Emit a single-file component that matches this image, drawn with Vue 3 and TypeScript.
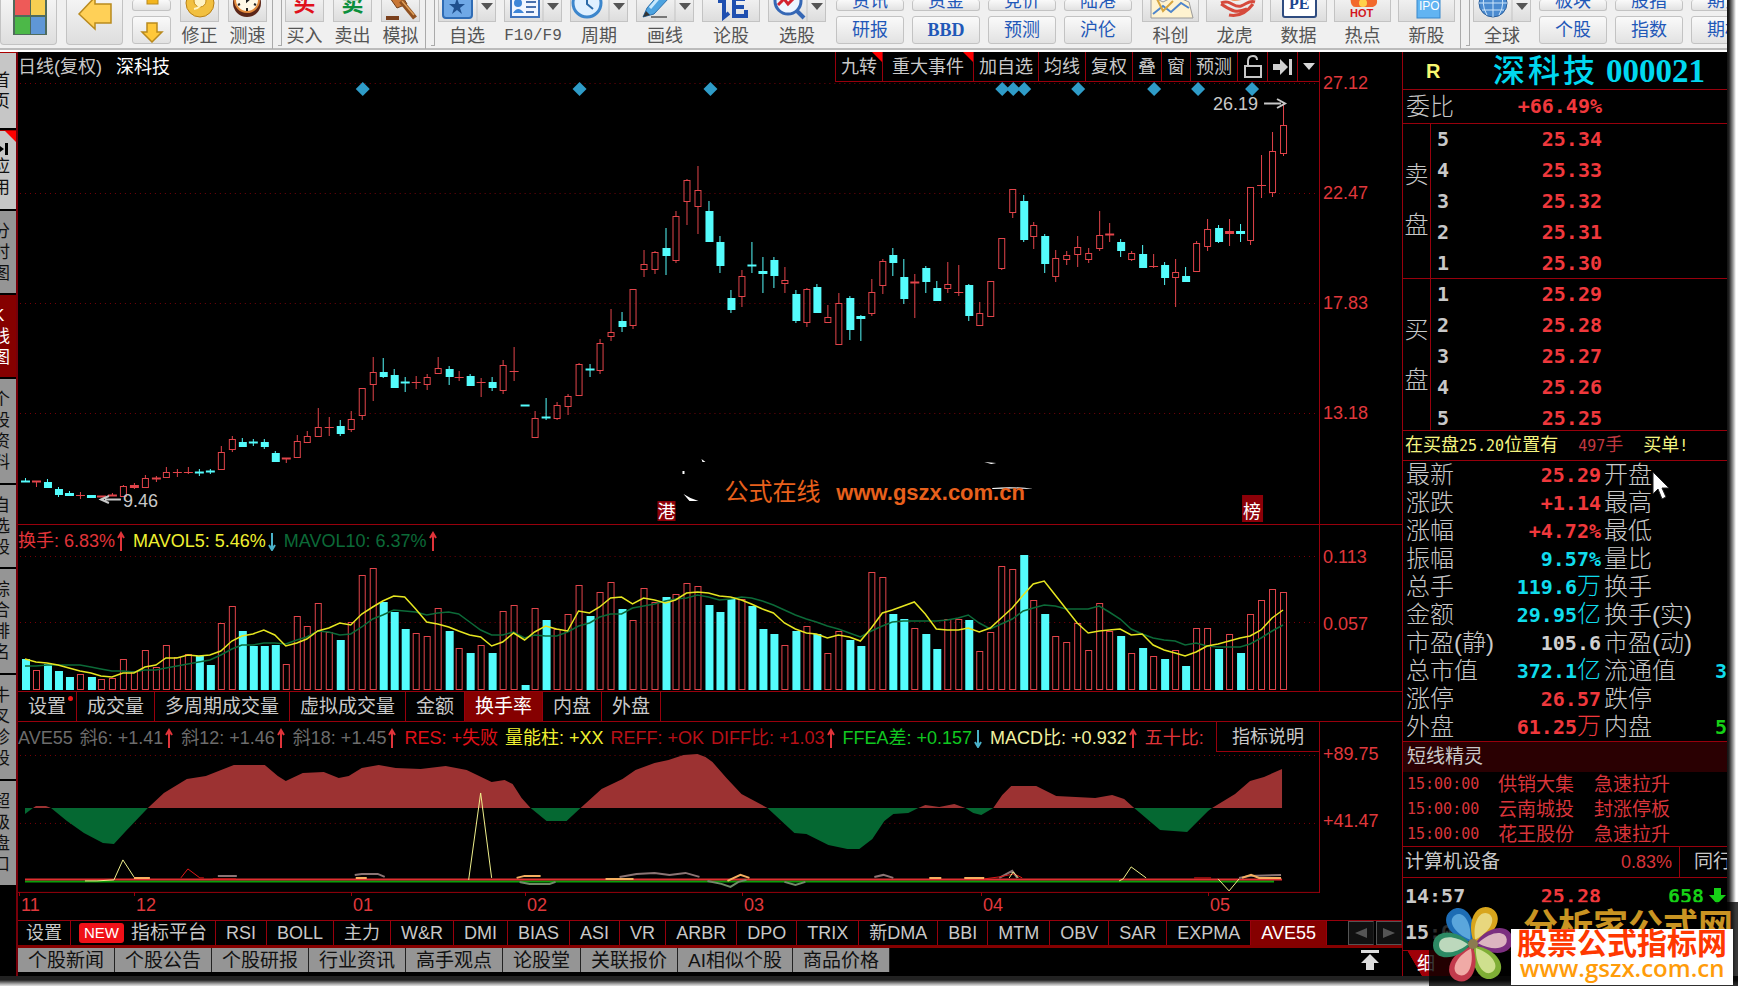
<script setup lang="ts">
type Kind = 'R' | 'C'
type Candle = [Kind, number, number, number, number, number]

// kind, high, body top, body bottom, low, turnover bar top
const candles: Candle[] = [
  ['C', 478, 481, 482, 482, 659], ['R', 481, 481, 482, 487, 670], ['C', 479, 482, 488, 488, 664],
  ['C', 487, 489, 495, 497, 671], ['C', 491, 494, 496, 496, 677], ['R', 492, 495, 495, 499, 674],
  ['C', 495, 496, 498, 498, 677], ['R', 496, 496, 497, 497, 679], ['R', 493, 495, 496, 496, 678],
  ['R', 485, 486, 496, 496, 659], ['R', 483, 486, 488, 489, 671], ['R', 475, 478, 487, 487, 650],
  ['R', 476, 478, 479, 482, 667], ['R', 467, 472, 477, 477, 645], ['R', 469, 472, 472, 477, 657],
  ['R', 467, 472, 472, 474, 654], ['C', 469, 472, 473, 476, 656], ['C', 469, 471, 472, 474, 665],
  ['R', 446, 452, 469, 469, 623], ['R', 436, 439, 449, 452, 606], ['C', 438, 442, 447, 447, 631],
  ['C', 439, 442, 443, 446, 646], ['C', 439, 442, 447, 449, 646], ['C', 451, 453, 462, 462, 645],
  ['R', 458, 458, 459, 463, 664], ['R', 435, 441, 457, 458, 616], ['R', 431, 436, 442, 443, 626],
  ['R', 408, 427, 436, 437, 603], ['R', 417, 427, 427, 436, 632], ['C', 420, 426, 434, 436, 640],
  ['R', 411, 419, 429, 432, 622], ['R', 388, 388, 415, 420, 575], ['R', 357, 372, 384, 401, 568],
  ['C', 358, 372, 377, 378, 602], ['C', 369, 375, 388, 388, 612], ['C', 377, 382, 383, 392, 629],
  ['R', 376, 382, 382, 389, 633], ['R', 374, 377, 384, 390, 636], ['R', 357, 368, 373, 374, 608],
  ['C', 366, 369, 377, 385, 631], ['R', 371, 377, 377, 381, 648], ['C', 374, 376, 386, 386, 653],
  ['R', 378, 382, 382, 397, 645], ['C', 377, 382, 388, 391, 653], ['R', 360, 365, 390, 394, 611],
  ['R', 347, 371, 371, 381, 605], ['C', 405, 405, 406, 406, 685], ['R', 411, 418, 437, 437, 608],
  ['C', 398, 417, 418, 420, 620], ['R', 402, 405, 418, 420, 629], ['R', 394, 396, 406, 415, 614],
  ['R', 363, 364, 395, 395, 585], ['C', 364, 369, 370, 377, 616], ['R', 339, 343, 370, 374, 592],
  ['R', 309, 332, 336, 341, 582], ['C', 312, 321, 327, 332, 609], ['R', 289, 289, 325, 329, 620],
  ['R', 250, 264, 269, 277, 588], ['R', 251, 252, 269, 274, 602], ['C', 228, 248, 256, 275, 597],
  ['R', 211, 216, 260, 263, 594], ['R', 179, 180, 201, 225, 583], ['R', 166, 190, 206, 234, 586],
  ['C', 201, 211, 242, 242, 605], ['C', 236, 242, 266, 273, 612], ['C', 290, 298, 310, 313, 599],
  ['R', 270, 276, 296, 307, 599], ['C', 242, 265, 266, 273, 606], ['C', 257, 272, 274, 293, 629],
  ['C', 257, 260, 276, 288, 634], ['R', 267, 280, 283, 293, 645], ['C', 290, 294, 321, 323, 631],
  ['R', 288, 289, 322, 327, 626], ['C', 284, 287, 313, 313, 634], ['R', 305, 317, 322, 323, 653],
  ['R', 293, 303, 344, 344, 631], ['C', 296, 298, 330, 340, 640], ['C', 315, 317, 319, 341, 646],
  ['R', 279, 292, 313, 316, 572], ['R', 259, 261, 285, 294, 577], ['C', 248, 255, 263, 276, 614],
  ['C', 259, 277, 299, 304, 619], ['R', 274, 282, 283, 318, 628], ['C', 266, 268, 282, 293, 634],
  ['C', 281, 288, 301, 301, 649], ['R', 262, 284, 288, 293, 619], ['R', 265, 292, 292, 296, 619],
  ['C', 284, 285, 316, 321, 620], ['R', 302, 313, 325, 325, 651], ['R', 281, 281, 316, 317, 632],
  ['R', 238, 238, 268, 270, 566], ['R', 189, 189, 212, 218, 569], ['C', 195, 201, 240, 242, 555],
  ['R', 222, 225, 236, 249, 600], ['C', 234, 236, 264, 273, 614], ['R', 250, 258, 276, 282, 636],
  ['R', 251, 255, 259, 265, 642], ['R', 236, 247, 254, 267, 623], ['R', 248, 253, 259, 263, 650],
  ['R', 211, 235, 248, 251, 603], ['R', 223, 234, 235, 242, 631], ['C', 239, 242, 251, 257, 636],
  ['R', 251, 253, 259, 261, 653], ['C', 245, 254, 268, 268, 648], ['R', 254, 266, 266, 268, 656],
  ['C', 262, 265, 278, 285, 659], ['R', 259, 272, 277, 307, 650], ['C', 267, 276, 282, 282, 666],
  ['R', 241, 243, 271, 271, 628], ['R', 219, 229, 246, 251, 628], ['C', 225, 228, 242, 243, 649],
  ['R', 219, 232, 234, 246, 634], ['C', 224, 232, 234, 242, 653], ['R', 187, 187, 240, 245, 614],
  ['R', 155, 185, 185, 198, 600], ['R', 132, 151, 192, 197, 589], ['R', 103, 125, 153, 156, 592],
]
const STEP = 10.85
const xOf = (i: number): number => Math.round(25.4 + i * STEP)

interface Shape { red: boolean; x: number; hi: number; top: number; h: number; bottom: number; lo: number; vol: number }
const shapes: Shape[] = candles.map(([k, hi, top, bottom, lo, vol], i) => ({
  red: k === 'R', x: xOf(i), hi, top, h: Math.max(bottom - top, 0), bottom, lo, vol,
}))

const earlier = [673, 673, 673, 673, 673, 659, 659, 660, 660]
function average(n: number): string {
  const all = [...earlier, ...candles.map((c) => c[5])]
  return candles.map((_, i) => {
    const end = i + earlier.length + 1
    const part = all.slice(end - n, end)
    return `${xOf(i)},${Math.round(part.reduce((a, b) => a + b, 0) / n)}`
  }).join(' ')
}
const ma5 = average(5)
const ma10 = average(10)

const wave = 'M25 807L25 813 33 807 36 805 46 805 51 807 67 820 84 832 103 842 114 843 126 830 148 807 164 792 187 778 206 775 234 764 265 764 278 775 286 780 303 772 324 771 339 777 349 775 362 767 379 764 396 767 421 768 446 765 467 769 492 781 505 779 513 783 522 797 531 807 547 820 567 820 581 807 602 788 623 778 636 769 655 762 669 759 684 754 698 753 706 756 713 761 727 777 742 793 768 807 795 832 807 833 829 844 848 848 860 848 873 838 885 820 894 813 909 812 919 807 926 804 940 806 955 803 966 807 974 812 982 814 994 807 1003 794 1012 785 1037 785 1057 795 1096 797 1113 794 1125 798 1135 807 1161 829 1188 831 1209 810 1213 807 1236 793 1251 780 1265 776 1283 768 1283 807Z'

const diamonds = [363, 580, 711, 1003, 1014, 1025, 1079, 1155, 1199, 1253]
const months: [string, number][] = [['11', 19], ['12', 134], ['01', 351], ['02', 525], ['03', 742], ['04', 981], ['05', 1208]]

const sideTabs = [
  { text: '首页', cls: 'light s1' }, { text: '应用', cls: 'light s2', mark: true }, { text: '分时图', cls: 's3' },
  { text: 'K线图', cls: 'on s3' }, { text: '个股资料', cls: 's4' }, { text: '自选股', cls: 's3' },
  { text: '综合排名', cls: 's4' }, { text: '牛叉诊股', cls: 's4' }, { text: '超级盘口', cls: 's4' },
]
const toolsA = [
  { id: 'fav', text: '自选', drop: true }, { id: 'card', text: 'F10/F9', drop: true }, { id: 'clock', text: '周期', drop: true },
  { id: 'pen', text: '画线', drop: true }, { id: 'talk', text: '论股', drop: false }, { id: 'pick', text: '选股', drop: true },
]
const toolsB = [
  { id: 'map', text: '科创' }, { id: 'dragon', text: '龙虎' }, { id: 'pe', text: '数据' }, { id: 'hot', text: '热点' }, { id: 'ipo', text: '新股' },
]
const pairsA = [['资讯', '研报'], ['资金', 'BBD'], ['竞价', '预测'], ['陆港', '沪伦']]
const pairsB = [['板块', '个股'], ['股指', '指数'], ['期货', '期权']]

const topTabs = [
  { text: '九转', fresh: true }, { text: '重大事件', fresh: true, wide: true }, { text: '加自选' }, { text: '均线' },
  { text: '复权' }, { text: '叠' }, { text: '窗' }, { text: '预测' },
]
const volumeTabs = ['设置', '成交量', '多周期成交量', '虚拟成交量', '金额', '换手率', '内盘', '外盘']
const indicatorTabs = ['RSI', 'BOLL', '主力', 'W&R', 'DMI', 'BIAS', 'ASI', 'VR', 'ARBR', 'DPO', 'TRIX', '新DMA', 'BBI', 'MTM', 'OBV', 'SAR', 'EXPMA', 'AVE55']
const infoTabs = ['个股新闻', '个股公告', '个股研报', '行业资讯', '高手观点', '论股堂', '关联报价', 'AI相似个股', '商品价格']

interface Legend { text: string; cls: string; dir?: 'up' | 'down' }
const volumeLegend: Legend[] = [
  { text: '换手: 6.83%', cls: 'c-red', dir: 'up' }, { text: 'MAVOL5: 5.46%', cls: 'c-yellow', dir: 'down' },
  { text: 'MAVOL10: 6.37%', cls: 'c-green', dir: 'up' },
]
const waveLegend: Legend[] = [
  { text: 'AVE55', cls: 'c-grey' }, { text: '斜6: +1.41', cls: 'c-grey', dir: 'up' }, { text: '斜12: +1.46', cls: 'c-grey', dir: 'up' },
  { text: '斜18: +1.45', cls: 'c-grey', dir: 'up' }, { text: 'RES: +失败', cls: 'c-pure' }, { text: '量能柱: +XX', cls: 'c-yellow' },
  { text: 'REFF: +OK', cls: 'c-dark' }, { text: 'DIFF比: +1.03', cls: 'c-dark', dir: 'up' }, { text: 'FFEA差: +0.157', cls: 'c-lime', dir: 'down' },
  { text: 'MACD比: +0.932', cls: 'c-pale', dir: 'up' }, { text: '五十比:', cls: 'c-red' },
]

const asks = [['5', '25.34'], ['4', '25.33'], ['3', '25.32'], ['2', '25.31'], ['1', '25.30']]
const bids = [['1', '25.29'], ['2', '25.28'], ['3', '25.27'], ['4', '25.26'], ['5', '25.25']]
const stats = [
  { a: '最新', v: '25.29', u: '', c: 'up', b: '开盘', e: '' },
  { a: '涨跌', v: '+1.14', u: '', c: 'up', b: '最高', e: '' },
  { a: '涨幅', v: '+4.72%', u: '', c: 'up', b: '最低', e: '' },
  { a: '振幅', v: '9.57%', u: '', c: 'cy', b: '量比', e: '' },
  { a: '总手', v: '119.6', u: '万', c: 'cy', b: '换手', e: '' },
  { a: '金额', v: '29.95', u: '亿', c: 'cy', b: '换手(实)', e: '' },
  { a: '市盈(静)', v: '105.6', u: '', c: 'wh', b: '市盈(动)', e: '' },
  { a: '总市值', v: '372.1', u: '亿', c: 'cy', b: '流通值', e: '3', ec: 'cy' },
  { a: '涨停', v: '26.57', u: '', c: 'up', b: '跌停', e: '' },
  { a: '外盘', v: '61.25', u: '万', c: 'up', b: '内盘', e: '5', ec: 'gr' },
]
const alerts = [['15:00:00', '供销大集', '急速拉升'], ['15:00:00', '云南城投', '封涨停板'], ['15:00:00', '花王股份', '急速拉升']]
const petals = [
  { r: -32, fill: '#1d6cb4', inner: '#5aa6dc' }, { r: 27, fill: '#d8a51c', inner: '#e8d77e' }, { r: 82, fill: '#7b2f80', inner: '#dcb4c0' },
  { r: 145, fill: '#7fae35', inner: '#cfe08e' }, { r: 205, fill: '#c23a4c', inner: '#f0aaa6' }, { r: 268, fill: '#2c8a64', inner: '#bcd8bc' },
]
</script>

<template>
  <div class="app">
    <header class="toolbar">
      <div class="group">
        <button class="big" aria-label="首页">
          <svg width="57" height="44"><rect x="12" y="-4" width="34" height="39" fill="#4f6b5c" /><rect x="14" y="-2" width="15" height="17" fill="#ee5a58" /><rect x="30" y="-2" width="14" height="17" fill="#f6cf52" /><rect x="14" y="17" width="15" height="17" fill="#4cb848" /><rect x="30" y="17" width="14" height="17" fill="#5f97d6" /></svg>
        </button>
        <button class="big" aria-label="后退">
          <svg width="57" height="44"><path d="M12 14L28 -3V4H44V23H28V29Z" fill="#ffd057" stroke="#b98a1e" stroke-width="1.5" /></svg>
        </button>
        <div class="pair narrow">
          <button class="half" aria-label="上"><svg width="38" height="12"><rect x="14" y="-6" width="11" height="12" fill="#f3b51d" stroke="#b98a1e" /></svg></button>
          <button class="half" aria-label="下"><svg width="38" height="28"><path d="M14 6H24V15H29L19 25L9 15H14Z" fill="#ffc83a" stroke="#b98a1e" stroke-width="1.5" /></svg></button>
        </div>
        <button class="tool small"><span class="icon"><svg width="37" height="22"><circle cx="19" cy="3" r="14" fill="#f2c040" stroke="#b98218" /><circle cx="19" cy="1" r="6" fill="#fff3c4" stroke="#c48e1b" /><path d="M20 2Q20 8 13 9" fill="none" stroke="#fff3c4" stroke-width="2" /></svg></span>修正</button>
        <button class="tool small"><span class="icon"><svg width="37" height="22"><circle cx="18" cy="3" r="14" fill="#5b2618" /><circle cx="18" cy="0" r="12" fill="#fff8e6" stroke="#e28a3c" stroke-width="2" /><path d="M18 -6V1L24 -4M18 8V11M9 5L11 4M27 5L25 4" stroke="#222" stroke-width="2" fill="none" /></svg></span>测速</button>
      </div>
      <i class="sep"></i>
      <div class="group">
        <button class="tool small"><span class="icon glyph red">买</span>买入</button>
        <button class="tool small"><span class="icon glyph green">卖</span>卖出</button>
        <button class="tool small"><span class="icon"><svg width="37" height="22"><path d="M8 -2L19 -6L25 4L15 8Z" fill="#c97735" stroke="#71401c" /><path d="M19 1L33 18" stroke="#8f5020" stroke-width="5" /><path d="M20 1L32 15" stroke="#e0a05a" stroke-width="1.5" /><rect x="4" y="16" width="13" height="4" fill="#7a3f1c" /></svg></span>模拟</button>
      </div>
      <i class="sep"></i>
      <div class="group tight">
        <button v-for="t in toolsA" :key="t.id" class="tool">
          <span class="icon">
            <svg width="56" height="22">
              <g v-if="t.id === 'fav'"><rect x="4" y="-8" width="29" height="26" rx="3" fill="#6fa8e6" stroke="#2f6cb5" stroke-width="2" /><path d="M18 -2L20 4H26L21 8L23 14L18 10L13 14L15 8L10 4H16Z" fill="#1f4f8e" /></g>
              <g v-else-if="t.id === 'card'"><rect x="6" y="-8" width="28" height="25" fill="#f2f6ff" stroke="#3f73bd" stroke-width="2" /><circle cx="13" cy="3" r="4" fill="#3f86d8" /><path d="M8 13Q13 5 19 13Z" fill="#3f86d8" /><path d="M21 2H31M21 7H31M21 12H29" stroke="#4970ae" stroke-width="2" /></g>
              <g v-else-if="t.id === 'clock'"><circle cx="16" cy="3" r="14" fill="#dff0ff" stroke="#3c86cc" stroke-width="3" /><path d="M16 -6V4L22 9" stroke="#2b6aa8" stroke-width="2" fill="none" /></g>
              <g v-else-if="t.id === 'pen'"><path d="M6 17L10 8L22 -6L32 -2L17 14Z" fill="#4da3e0" stroke="#2d70ab" /><path d="M13 8L25 -6" stroke="#c8e8fc" stroke-width="3" /><path d="M6 17L9 11L13 15Z" fill="#333" /><path d="M14 17H30" stroke="#777" stroke-width="2" /></g>
              <g v-else-if="t.id === 'talk'" fill="none" stroke="#1e4fb0" stroke-width="4"><path d="M15 1H21V17L26 13M29 -1H42M31 0V16H43V10M31 7H41" /></g>
              <g v-else><circle cx="19" cy="1" r="13" fill="#eef5ff" stroke="#3567b5" stroke-width="3" /><path d="M28 11L35 18" stroke="#3567b5" stroke-width="4" /><path d="M9 5L15 -1L19 4L28 -5" stroke="#d32230" stroke-width="3" fill="none" /></g>
              <g v-if="t.drop"><path d="M38 0V22" stroke="#c3c3c3" /><path d="M42 3H54L48 10Z" fill="#555" /></g>
            </svg>
          </span><span :class="{ mono: t.id === 'card' }">{{ t.text }}</span>
        </button>
      </div>
      <div class="group tight lead">
        <div v-for="p in pairsA" :key="p[1]" class="pair">
          <button class="half">{{ p[0] }}</button>
          <button class="half" :class="{ serif: p[1] === 'BBD' }">{{ p[1] }}</button>
        </div>
      </div>
      <div class="group close lead">
        <button v-for="t in toolsB" :key="t.id" class="tool">
          <span class="icon">
            <svg width="56" height="22">
              <g v-if="t.id === 'map'"><path d="M8 -4L20 2L32 -4L46 2L50 18H8Z" fill="#fff3d0" stroke="#9a9a9a" /><path d="M10 14L20 6L28 12L38 3L46 8" fill="none" stroke="#4f86cc" stroke-width="2" /><path d="M14 -1L20 11L30 1" fill="none" stroke="#d7a640" stroke-width="2" /></g>
              <g v-else-if="t.id === 'dragon'" fill="none" stroke="#d64a3c" stroke-width="3"><path d="M14 3C24 -1 26 8 34 6C40 4 42 0 48 2M22 15C32 17 40 12 46 4M14 4C24 10 28 14 40 9" /><path d="M22 -3C28 3 36 -4 44 -2" stroke="#f09a62" /></g>
              <g v-else-if="t.id === 'pe'"><rect x="12" y="-8" width="33" height="25" rx="2" fill="#fff" stroke="#2f4c80" stroke-width="2" /><text x="18" y="9" class="pe">PE</text></g>
              <g v-else-if="t.id === 'hot'"><path d="M16 -5Q14 8 22 7H38Q45 5 40 -6Q32 5 29 -5Q24 5 16 -5Z" fill="#f2692c" /><circle cx="28" cy="3" r="4" fill="#ffd24a" /><text x="15" y="17" class="hottext">HOT</text></g>
              <g v-else><rect x="18" y="-8" width="23" height="26" fill="#62b4f2" stroke="#3687cc" /><text x="20" y="10" class="ipo">IPO</text></g>
            </svg>
          </span>{{ t.text }}
        </button>
      </div>
      <i class="sep"></i>
      <div class="group tight">
        <button class="tool"><span class="icon"><svg width="56" height="22"><circle cx="19" cy="3" r="14" fill="#4b8bd0" stroke="#2a5f9c" /><path d="M5 3H33M8 10H30M19 -11V17M12 -9Q6 3 13 15M26 -9Q32 3 25 15" stroke="#cbe4fa" fill="none" /><path d="M38 0V22" stroke="#c3c3c3" /><path d="M42 3H54L48 10Z" fill="#555" /></svg></span>全球</button>
        <div v-for="p in pairsB" :key="p[1]" class="pair"><button class="half">{{ p[0] }}</button><button class="half">{{ p[1] }}</button></div>
      </div>
    </header>

    <main class="workspace">
      <nav class="side">
        <button v-for="s in sideTabs" :key="s.text" :class="s.cls"><b v-if="s.mark" class="flag"></b><svg v-if="s.mark" width="8" height="14"><path d="M0 4L4 7L0 10ZM5 1H8V13H5Z" /></svg><span v-for="c in s.text" :key="c">{{ c }}</span></button>
      </nav>

      <section class="center">
        <div class="pane headrow">
          <div class="head">
            <h1>日线(复权)<strong>深科技</strong></h1>
            <div class="toptabs">
              <button v-for="t in topTabs" :key="t.text" :class="{ fresh: t.fresh, wide: t.wide }">{{ t.text }}</button>
              <button class="ic" aria-label="解锁"><svg width="20" height="24"><path d="M2 11H18V22H2ZM5 11V6Q5 1 10 1Q14 1 14 5" fill="none" stroke="#c8c8c8" stroke-width="2" /></svg></button>
              <button class="ic" aria-label="最后"><svg width="20" height="20"><path d="M0 7H7V2L15 10L7 18V13H0ZM16 2H19V18H16Z" fill="#d0d0d0" /></svg></button>
              <button class="ic last" aria-label="更多"><svg width="12" height="8"><path d="M0 0H12L6 7Z" fill="#d8d8d8" /></svg></button>
            </div>
          </div>
        </div>

        <div class="pane price">
          <svg class="plot" viewBox="18 82 1302 442" preserveAspectRatio="none">
            <g class="grid"><path v-for="y in [83, 193, 303, 413]" :key="y" :d="`M20 ${y}.5H1319`" /></g>
            <path v-for="x in diamonds" :key="x" :d="`M${x} 82L${x + 7} 89L${x} 96L${x - 7} 89Z`" fill="#2f9cc8" />
            <g v-for="s in shapes" :key="s.x" :class="s.red ? 'r' : 'c'">
              <path :d="`M${s.x}.5 ${s.hi}V${s.top}M${s.x}.5 ${s.bottom}V${s.lo}`" />
              <rect v-if="s.h > 2" :x="s.x - 3 + 0.5 - (s.red ? 0 : 0.5)" :y="s.red ? s.top + 0.5 : s.top" :width="s.red ? 6 : 8" :height="s.h" />
              <path v-else :d="`M${s.x - 4} ${s.top + 0.5}H${s.x + 5}`" :stroke-width="s.h + 1" />
            </g>
            <g class="note"><text x="1214" y="110">26.19</text><path d="M1265 103.5H1282M1278 99L1286 103.5L1278 108" /><text x="123" y="507">9.46</text><path d="M121 499.5H105M109 496L101 499.5L109 503" /></g>
            <g class="badge"><rect x="658" y="501" width="18" height="20" /><text x="658" y="518">港</text><rect x="1243" y="495" width="21" height="27" /><text x="1244" y="518">榜</text></g>
            <g fill="#fff"><path d="M684 494L691 498L699 501H690ZM702 459L706 462H703ZM683 471H685V474H683ZM985 462L997 463L992 464ZM993 488Q1015 486 1034 489Q1010 488 993 489Z" /></g>
            <g class="mark"><text x="725" y="500" class="cn">公式在线</text><text x="837" y="500" class="url">www.gszx.com.cn</text></g>
          </svg>
          <div class="axis four"><span>27.12</span><span>22.47</span><span>17.83</span><span>13.18</span></div>
        </div>

        <div class="pane rule">
          <div class="legend">
            <span v-for="l in volumeLegend" :key="l.text" :class="l.cls">{{ l.text }}<svg v-if="l.dir" width="8" height="20" :class="l.dir"><path v-if="l.dir === 'up'" d="M4 20V2M1 7L4 2L7 7" /><path v-else d="M4 2V19M1 14L4 19L7 14" /></svg></span>
          </div>
        </div>
        <div class="pane volume">
          <svg class="plot" viewBox="18 556 1302 135" preserveAspectRatio="none">
            <g class="grid"><path d="M20 556.5H1319M20 622.5H1319" /></g>
            <g v-for="s in shapes" :key="s.x" :class="s.red ? 'r' : 'c'">
              <rect :x="s.red ? s.x - 2.5 : s.x - 3" :y="s.red ? s.vol + 0.5 : s.vol" :width="s.red ? 6 : 8" :height="690 - s.vol - (s.red ? 1 : 0)" />
            </g>
            <polyline :points="ma10" fill="none" stroke="#0c6a38" stroke-width="1.5" />
            <polyline :points="ma5" fill="none" stroke="#e6e620" stroke-width="1.5" />
          </svg>
          <div class="axis two"><span>0.113</span><span>0.057</span></div>
        </div>
        <div class="tabs voltabs">
          <button v-for="t in volumeTabs" :key="t" :class="{ active: t === '换手率', dot: t === '设置' }">{{ t }}</button>
        </div>

        <div class="pane rule">
          <div class="legend">
            <span v-for="l in waveLegend" :key="l.text" :class="l.cls">{{ l.text }}<svg v-if="l.dir" width="8" height="20" :class="l.dir"><path v-if="l.dir === 'up'" d="M4 20V2M1 7L4 2L7 7" /><path v-else d="M4 2V19M1 14L4 19L7 14" /></svg></span>
            <button class="explain">指标说明</button>
          </div>
        </div>
        <div class="pane wave">
          <svg class="plot" viewBox="18 752 1302 140" preserveAspectRatio="none">
            <defs><clipPath id="above"><rect x="18" y="740" width="1302" height="67" /></clipPath><clipPath id="below"><rect x="18" y="807" width="1302" height="80" /></clipPath></defs>
            <g class="grid"><path d="M20 754.5H1319M20 822.5H1319" /></g>
            <path :d="wave" fill="#9c3232" clip-path="url(#above)" /><path :d="wave" fill="#056832" clip-path="url(#below)" />
            <g fill="none">
              <path d="M25 880.5H1275" stroke="#0aa00a" stroke-width="2" />
              <path d="M25 878.5H1283" stroke="#e03030" stroke-width="2" />
              <path d="M218 875H237M355 874L362 873H378L385 876M620 876L637 873L655 872L670 874L686 872L700 876M875 876L884 874L894 877M1000 877L1013 870L1018 877M1240 877L1250 875L1282 874" stroke="#8b7474" stroke-width="2" />
              <path d="M520 881L530 883H550L556 881M708 880L722 883L731 886L739 881L747 879M785 881L796 884L806 881" stroke="#708a68" stroke-width="2" />
              <path d="M134 877H150M356 877H367M517 877L525 875H541M606 878H634M728 880L741 874L750 877M930 877H942M965 877H985M1243 877L1252 874L1260 877H1282" stroke="#f5b060" stroke-width="2" />
              <path d="M181 877L188 868L200 877H204M213 878H236M985 878L1000 876L1015 873L1023 877M1195 877H1212" stroke="#e01818" />
              <path d="M85 880H97L114 879L123 859L134 876M469 879L481 792L492 877M1010 877L1014 871L1019 877M1120 880L1124 878L1132 866L1147 877M1219 878L1230 890L1240 878" stroke="#f0f08c" />
            </g>
            <path d="M18 891.5H1320" stroke="#98000c" />
          </svg>
          <div class="axis two"><span>+89.75</span><span>+41.47</span></div>
        </div>
        <div class="pane months">
          <svg class="plot" viewBox="18 892 1302 28" preserveAspectRatio="none"><g v-for="m in months" :key="m[0]"><path :d="`M${m[1] + 0.5} 892V896`" stroke="#98000c" /><text :x="m[1] + 2" y="911">{{ m[0] }}</text></g></svg>
        </div>

        <div class="tabs indtabs">
          <button class="set">设置</button><button class="platform"><em>NEW</em>指标平台</button>
          <button v-for="t in indicatorTabs" :key="t" :class="{ active: t === 'AVE55' }">{{ t }}</button>
          <div class="scrollers"><button aria-label="左移"><svg width="12" height="10"><path d="M12 0V10L0 5Z" fill="#555" /></svg></button><button aria-label="右移"><svg width="12" height="10"><path d="M0 0V10L12 5Z" fill="#555" /></svg></button></div>
        </div>
        <div class="infotabs">
          <button v-for="t in infoTabs" :key="t">{{ t }}</button>
          <button class="top" aria-label="展开"><svg width="20" height="20"><path d="M1 0H19V3H1ZM10 4L19 13H14V20H6V13H1Z" fill="#ddd" /></svg></button>
        </div>
      </section>

      <aside class="quote">
        <h2><i>R</i><span>深科技</span><b>000021</b></h2>
        <div class="ratio"><span>委比</span><b>+66.49%</b></div>
        <div class="book">
          <div class="which">卖<br>盘</div>
          <table><tbody><tr v-for="r in asks" :key="r[0]"><th>{{ r[0] }}</th><td>{{ r[1] }}</td></tr></tbody></table>
        </div>
        <div class="book bid">
          <div class="which">买<br>盘</div>
          <table><tbody><tr v-for="r in bids" :key="r[0]"><th>{{ r[0] }}</th><td>{{ r[1] }}</td></tr></tbody></table>
        </div>
        <div class="message"><span>在买盘<tt>25.20</tt>位置有</span><span class="lots"><tt>497</tt>手</span><span>买单<tt>!</tt></span></div>
        <table class="stats"><tbody>
          <tr v-for="s in stats" :key="s.a"><th>{{ s.a }}</th><td :class="s.c">{{ s.v }}<span v-if="s.u">{{ s.u }}</span></td><th>{{ s.b }}</th><td class="end" :class="s.ec">{{ s.e }}</td></tr>
        </tbody></table>
        <h3>短线精灵</h3>
        <div class="alerts"><div v-for="a in alerts" :key="a[1]"><tt>{{ a[0] }}</tt><span>{{ a[1] }}</span><span>{{ a[2] }}</span></div></div>
        <div class="sector"><span>计算机设备</span><b>0.83%</b><button>同行</button></div>
        <div class="ticks">
          <div><time>14:57</time><b class="up">25.28</b><b class="gr">658</b><svg width="17" height="16"><path d="M5 0H12V7H17L8 16L0 7H5Z" fill="#16d016" /></svg></div>
          <div><time>15:00</time></div>
        </div>
        <div class="detail"><button>细</button></div>
        <svg class="cursor" width="18" height="30"><path d="M1 1V23L6 18L10 28L14 26L10 17H17Z" fill="#fff" stroke="#222" /></svg>
      </aside>
    </main>

    <footer class="edge"></footer>
    <div class="brand">
      <svg class="flower" width="84" height="84" viewBox="-42 -42 84 84">
        <g v-for="p in petals" :key="p.r" :transform="`rotate(${p.r})`"><path d="M0 -2C-18 -18 -15 -40 0 -40C15 -40 18 -18 0 -2Z" :fill="p.fill" /><path d="M0 -5C-11 -20 -9 -34 0 -34C9 -34 11 -20 0 -5Z" :fill="p.inner" /></g>
        <circle r="5" fill="#8b7b50" />
      </svg>
      <div class="gold">分析家公式网</div>
      <div class="card"><strong>股票公式指标网</strong><a href="#">www.gszx.com.cn</a></div>
    </div>
  </div>
</template>

<style>
body { margin: 0; background: #fff; }
</style>

<style scoped>
* { box-sizing: border-box; }
.app { position: relative; min-height: 100vh; padding-right: 11px; overflow: hidden; font-family: "Liberation Sans", "Noto Sans CJK SC", sans-serif; color: #c8c8c8; background: linear-gradient(to left, #fff 0, #fff 2px, #999 5px, #222 9px, #111 11px); }
button { margin: 0; padding: 0; border: 0; background: none; font: inherit; color: inherit; white-space: nowrap; cursor: pointer; }
svg { display: block; flex: none; }

.toolbar { display: flex; height: 52px; overflow: hidden; background: #f0f0f0; border-bottom: 2px solid #fff; box-shadow: inset 0 -2px #bbb; color: #555; }
.group { display: flex; flex: none; gap: 9px; }
.group.tight { gap: 8px; }
.group.close { gap: 7px; }
.group.lead { margin-left: 10px; }
.group.close .tool { width: 57px; }
.big { width: 57px; height: 45px; border: 1px solid #c3c3c3; border-top: 0; border-radius: 0 0 4px 4px; background: linear-gradient(#f4f4f4, #dedede); }
.tool { display: flex; flex-direction: column; align-items: center; width: 58px; height: 48px; font-size: 18px; line-height: 28px; }
.tool.small { width: 39px; }
.icon { display: block; width: 100%; height: 22px; flex: none; overflow: hidden; border: 1px solid #c3c3c3; border-top: 0; background: linear-gradient(#f0f0f0, #ddd); }
.glyph { font-size: 22px; line-height: 8px; font-weight: 700; text-align: center; }
.glyph.red { color: #e0101c; }
.glyph.green { color: #0b8f3c; }
.mono { font-family: "Liberation Mono", monospace; font-size: 16px; }
.sep { flex: none; width: 18px; height: 49px; background: linear-gradient(#aaa, #aaa) 5px 0 / 1px 49px no-repeat, linear-gradient(#aaa, #aaa) 14px 0 / 1px 46px no-repeat, linear-gradient(#aaa, #aaa) 11px 45px / 4px 1px no-repeat; }
.pair { display: flex; flex-direction: column; gap: 5px; width: 68px; }
.pair.narrow { width: 39px; }
.half { height: 28px; border: 1px solid #c3c3c3; border-radius: 3px; background: linear-gradient(#fafafa, #e2e2e2); color: #1f58b8; font-size: 18px; line-height: 26px; overflow: hidden; }
.half:first-child { height: 11px; border-top: 0; display: flex; align-items: flex-end; justify-content: center; line-height: 18px; }
.serif { font-family: "Liberation Serif", serif; font-weight: 700; }
.pe { font: 700 16px "Liberation Serif", serif; fill: #1d4590; }
.hottext { font: 700 11px "Liberation Sans", sans-serif; fill: #d3161c; }
.ipo { font: 12px "Liberation Sans", sans-serif; fill: #fff; }

.workspace { display: flex; background: #000; }
.side { display: flex; flex-direction: column; gap: 2px; flex: none; width: 16px; color: #111; }
.side button { position: relative; display: flex; flex-direction: column; align-items: flex-start; justify-content: center; overflow: hidden; background: #959595; font-size: 17px; line-height: 21px; }
.side span { margin-left: -7px; }
.side .light { background: #c6c6c6; border-top: 1px solid #a00; }
.side .on { background: #850000; color: #fff; }
.side .s1 { height: 76px; }
.side .s2 { height: 79px; }
.side .s3 { height: 82px; }
.side .s4 { height: 104px; }
.flag { position: absolute; top: 0; right: 0; border-top: 11px solid #f00; border-left: 11px solid transparent; }

.center { flex: 1; min-width: 0; border-left: 2px solid #76000a; }
.pane { display: grid; grid-template-columns: minmax(0, 1fr) 82px; }
.plot { width: 100%; height: 100%; border-right: 1px solid #98000c; overflow: visible; }
.headrow { height: 30px; }
.head { display: flex; justify-content: space-between; border-right: 1px solid #98000c; }
h1 { margin: 0; font-size: 18px; line-height: 30px; font-weight: 400; }
h1 strong { margin-left: 14px; font-weight: 400; color: #fff; }
.toptabs { display: flex; height: 30px; border-bottom: 1px solid #98000c; font-size: 18px; }
.toptabs button { position: relative; padding: 0 5px; border-left: 1px solid #98000c; line-height: 28px; }
.toptabs .wide { padding: 0 9px; }
.toptabs .ic { display: grid; place-items: center; width: 30px; padding: 0; }
.toptabs .ic.last { width: 22px; }
.fresh::after { content: ""; position: absolute; top: 0; right: 0; border-top: 10px solid #f00; border-left: 10px solid transparent; }
.price { height: 442px; }
.axis { display: flex; flex-direction: column; padding-left: 3px; font-size: 18px; line-height: 22px; color: #e0383c; }
.axis.four { gap: 88px; margin-top: -10px; }
.axis.two { gap: 45px; margin-top: -10px; }
.grid path { stroke: #780008; stroke-dasharray: 1 4; fill: none; }
.r path, .r rect { stroke: #e2444a; fill: none; }
.c path { stroke: #54fcfc; fill: none; }
.c rect { fill: #54fcfc; }
.note text { font-size: 18px; fill: #c8c8c8; }
.note path { stroke: #c8c8c8; stroke-width: 2; fill: none; }
.badge rect { fill: #8c0008; }
.badge text { font-size: 18px; fill: #fff; }
.mark text { fill: #e8601c; }
.cn { font-family: "Noto Sans CJK SC", sans-serif; font-size: 24px; }
.url { font-size: 22px; font-weight: 700; }

.rule { height: 32px; border-top: 1px solid #98000c; }
.legend { position: relative; display: flex; align-items: center; height: 31px; overflow: hidden; border-right: 1px solid #98000c; font-size: 18px; line-height: 30px; white-space: nowrap; }
.legend span { display: flex; align-items: center; margin-right: 7px; }
.legend span svg { margin: 0 1px 0 2px; }
.legend path { fill: none; stroke: currentColor; stroke-width: 2; }
.up { color: #e0343a; }
.down { color: #4ab0c8; }
.c-red { color: #e0343a; }
.c-yellow { color: #f0f030; }
.c-green { color: #0c6a38; }
.c-grey { color: #6c6c6c; }
.c-pure { color: #e01018; }
.c-dark { color: #b81018; }
.c-lime { color: #10c820; }
.c-pale { color: #f0f0a0; }
.explain { position: absolute; top: 0; right: 0; width: 103px; height: 30px; border-left: 1px solid #98000c; border-bottom: 1px solid #98000c; background: #000; font-size: 18px; }
.volume { height: 135px; }
.tabs { display: flex; border-top: 1px solid #98000c; }
.tabs button { border-right: 1px solid #98000c; }
.tabs .active { background: #850000; color: #fff; }
.voltabs { height: 30px; font-size: 19px; line-height: 29px; }
.voltabs button { position: relative; padding: 0 10px; }
.dot::after { content: ""; position: absolute; top: 4px; right: 3px; width: 5px; height: 5px; border-radius: 50%; background: #f01818; }
.wave { height: 139px; }
.months { height: 28px; }
.months .plot { border: 0; }
.months text { font-size: 18px; fill: #e0383c; }
.indtabs { height: 28px; border-bottom: 3px solid #850000; font-size: 18px; line-height: 24px; }
.indtabs > button { padding: 0 10px; }
.indtabs .set { padding: 0 8px; }
.indtabs .platform { display: flex; align-items: center; gap: 7px; padding: 0 8px; font-size: 19px; }
.platform em { padding: 0 5px; border-radius: 3px; background: #f01018; color: #fff; font-size: 15px; line-height: 20px; font-style: normal; }
.scrollers { display: flex; gap: 2px; margin-left: auto; }
.scrollers button { display: grid; place-items: center; width: 26px; border: 1px solid #555; border-right-color: #222; background: #111; }
.infotabs { display: flex; height: 24px; overflow: hidden; font-size: 19px; line-height: 26px; color: #111; }
.infotabs button { padding: 0 10px; border-right: 1px solid #222; background: #959595; }
.infotabs .top { display: grid; place-items: center; margin-left: auto; margin-right: 12px; border: 0; background: none; }

.quote { position: relative; flex: none; width: 325px; overflow: hidden; border-left: 1px solid #98000c; }
h2 { display: flex; align-items: center; height: 38px; margin: 0; border-bottom: 1px solid #98000c; color: #00d8f0; line-height: 36px; }
h2 i { width: 90px; padding-left: 23px; color: #f8f870; font: 700 20px/36px "Liberation Sans", sans-serif; }
h2 span { font-size: 32px; letter-spacing: 3px; font-weight: 500; }
h2 b { margin-left: 8px; font-family: "Liberation Serif", serif; font-size: 33px; }
.ratio { display: flex; height: 34px; border-bottom: 1px solid #98000c; font-size: 24px; line-height: 33px; }
.ratio span { width: 62px; padding-left: 3px; font-weight: 300; }
.ratio b { width: 137px; }
.ratio b, .book td, .book th, .stats td, .ticks { font-family: "DejaVu Sans Mono", "Noto Sans CJK SC", monospace; font-size: 20px; font-weight: 700; text-align: right; }
.ratio b, .book td { color: #f0383c; }
.book { display: flex; align-items: flex-start; height: 155px; overflow: hidden; border-bottom: 1px solid #98000c; }
.book.bid { height: 152px; }
.which { align-self: stretch; width: 28px; padding-top: 26px; border-right: 1px solid #98000c; font-size: 24px; font-weight: 300; line-height: 50px; text-align: center; }
table { border-collapse: collapse; }
.book table { width: 171px; }
.book th, .book td { height: 31px; padding: 0; line-height: 29px; }
.book th { width: 18px; }
.message { display: flex; gap: 20px; height: 30px; padding-left: 2px; border-bottom: 1px solid #98000c; color: #f4f480; font-size: 18px; line-height: 28px; white-space: nowrap; }
.message .lots { color: #c03840; }
tt { font-family: "DejaVu Sans Mono", monospace; font-size: 15px; }
.stats { width: 100%; table-layout: fixed; }
.stats tr { height: 28px; }
.stats th { width: 102px; padding: 0 0 0 3px; font-size: 24px; line-height: 28px; font-weight: 300; text-align: left; white-space: nowrap; }
.stats td { width: 96px; padding: 0; line-height: 28px; white-space: nowrap; }
.stats td span { font-size: 24px; font-weight: 300; line-height: 20px; }
.stats .end { width: auto; direction: rtl; overflow: hidden; }
.stats .up, .ticks .up { color: #f0383c; }
.cy { color: #10dcec; }
.wh { color: #d0d0d0; }
.gr { color: #16d016; }
h3 { margin: 0; height: 31px; padding-left: 4px; border-top: 1px solid #98000c; background: #2a0002; font-size: 19px; line-height: 30px; font-weight: 400; }
.alerts { height: 75px; border-bottom: 1px solid #98000c; color: #d8343a; font-size: 19px; }
.alerts div { display: grid; grid-template-columns: 91px 96px 1fr; height: 25px; padding-left: 4px; line-height: 25px; }
.sector { display: flex; height: 31px; border-bottom: 1px solid #98000c; font-size: 19px; line-height: 30px; }
.sector span { flex: 1; padding-left: 2px; }
.sector b { color: #d8343a; font-size: 18px; font-weight: 400; padding-right: 7px; }
.sector button { width: 48px; padding-left: 14px; border-left: 1px solid #98000c; overflow: hidden; text-align: left; }
.ticks { height: 72px; }
.ticks div { display: grid; grid-template-columns: 64px 134px 103px 1fr; align-items: center; column-gap: 0; height: 36px; }
.ticks time { padding-left: 2px; text-align: left; }
.ticks svg { margin-left: 5px; }
.detail { height: 26px; border-top: 1px solid #98000c; font-size: 18px; line-height: 26px; }
.detail button { width: 52px; height: 25px; padding-left: 14px; background: linear-gradient(60deg, #000 28%, #a00008 29%); color: #fff; text-align: left; }
.cursor { position: absolute; left: 249px; top: 419px; }

.edge { height: 14px; margin-right: -11px; background: linear-gradient(#222 0, #222 4px, #aaa 8px, #fff 11px); }
.brand { position: absolute; right: 0; bottom: 4px; width: 309px; height: 84px; background: rgba(0, 0, 0, .78); }
.flower { position: absolute; left: 2px; top: 0; }
.gold { position: absolute; left: 94px; top: 4px; font-size: 35px; line-height: 42px; font-weight: 700; color: #c99422; white-space: nowrap; }
.card { position: absolute; right: 5px; bottom: 1px; width: 222px; height: 56px; overflow: hidden; background: #fff; text-align: center; }
.card strong { display: block; color: #ff3800; font-size: 30px; line-height: 30px; font-weight: 700; }
.card a { display: block; color: #ff9c0a; font-family: "Open Sans", "Noto Sans", sans-serif; font-size: 24px; line-height: 18px; font-weight: 600; text-decoration: none; }
</style>
